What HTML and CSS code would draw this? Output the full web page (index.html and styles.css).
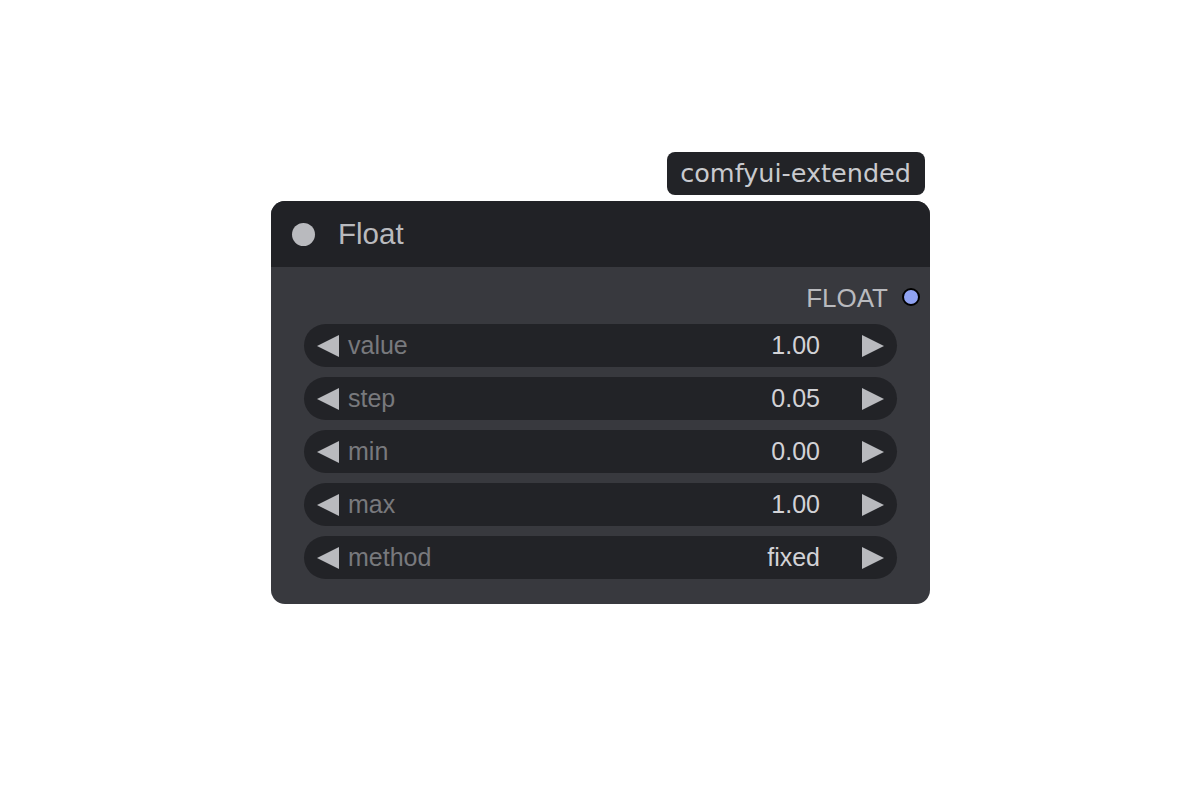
FILE: index.html
```html
<!DOCTYPE html>
<html>
<head>
<meta charset="utf-8">
<link rel="stylesheet" href="styles.css">
</head>
<body>
<div class="wrap">
  <div class="badge">comfyui-extended</div>
  <div class="node">
    <div class="header">
      <span class="hdot"></span>
      <span class="title">Float</span>
    </div>
    <div class="body">
      <div class="output">
        <span class="otext">FLOAT</span>
        <span class="odot"></span>
      </div>
      <div class="widgets">
        <div class="widget">
          <svg class="arrow" viewBox="0 0 22 22"><polygon points="22,0 0,11 22,22"/></svg>
          <span class="label">value</span>
          <span class="val">1.00</span>
          <svg class="arrow right" viewBox="0 0 22 22"><polygon points="0,0 22,11 0,22"/></svg>
        </div>
        <div class="widget">
          <svg class="arrow" viewBox="0 0 22 22"><polygon points="22,0 0,11 22,22"/></svg>
          <span class="label">step</span>
          <span class="val">0.05</span>
          <svg class="arrow right" viewBox="0 0 22 22"><polygon points="0,0 22,11 0,22"/></svg>
        </div>
        <div class="widget">
          <svg class="arrow" viewBox="0 0 22 22"><polygon points="22,0 0,11 22,22"/></svg>
          <span class="label">min</span>
          <span class="val">0.00</span>
          <svg class="arrow right" viewBox="0 0 22 22"><polygon points="0,0 22,11 0,22"/></svg>
        </div>
        <div class="widget">
          <svg class="arrow" viewBox="0 0 22 22"><polygon points="22,0 0,11 22,22"/></svg>
          <span class="label">max</span>
          <span class="val">1.00</span>
          <svg class="arrow right" viewBox="0 0 22 22"><polygon points="0,0 22,11 0,22"/></svg>
        </div>
        <div class="widget">
          <svg class="arrow" viewBox="0 0 22 22"><polygon points="22,0 0,11 22,22"/></svg>
          <span class="label">method</span>
          <span class="val">fixed</span>
          <svg class="arrow right" viewBox="0 0 22 22"><polygon points="0,0 22,11 0,22"/></svg>
        </div>
      </div>
    </div>
  </div>
</div>
</body>
</html>
```
FILE: styles.css
```css
html, body {
  margin: 0;
  padding: 0;
  background: #ffffff;
}
body {
  padding: 152px 0 0 271px;
  font-family: "Liberation Sans", Arial, sans-serif;
}
.wrap {
  width: 659px;
  display: flex;
  flex-direction: column;
  align-items: flex-end;
}
.badge {
  height: 43px;
  box-sizing: border-box;
  padding: 0 14px 2px 13px;
  margin-right: 5px;
  margin-bottom: 6px;
  background: #222327;
  border-radius: 8px;
  color: #c9cace;
  font-family: "DejaVu Sans", sans-serif;
  font-size: 25.5px;
  display: flex;
  align-items: center;
}
.node {
  width: 659px;
  height: 403px;
  border-radius: 14px;
  background: #38393e;
  overflow: hidden;
  display: flex;
  flex-direction: column;
}
.header {
  height: 66px;
  flex: none;
  background: #212226;
  display: flex;
  align-items: center;
  padding-left: 21px;
}
.hdot {
  width: 23px;
  height: 23px;
  border-radius: 50%;
  background: #b9babe;
  margin-right: 23px;
}
.title {
  color: #b9babe;
  font-size: 29.5px;
  line-height: 1;
  padding-bottom: 1px;
}
.body {
  display: flex;
  flex-direction: column;
}
.output {
  height: 43px;
  margin-top: 8px;
  margin-bottom: 6px;
  display: flex;
  justify-content: flex-end;
  align-items: center;
  padding-right: 10px;
}
.otext {
  color: #b9babe;
  font-size: 26px;
  line-height: 1;
  margin-right: 14px;
  padding-top: 3px;
}
.odot {
  width: 14px;
  height: 14px;
  border-radius: 50%;
  background: #8fa2f2;
  border: 2px solid #000000;
  margin-top: 1px;
}
.widgets {
  display: flex;
  flex-direction: column;
  gap: 10px;
  padding: 0 33px;
}
.widget {
  height: 43px;
  border-radius: 22px;
  background: #222327;
  display: flex;
  align-items: center;
  padding: 0 13px;
  font-size: 25px;
}
.arrow {
  width: 22px;
  height: 22px;
  flex: none;
  fill: #b9babe;
  margin-right: 9px;
}
.arrow.right {
  margin-right: 0;
  margin-left: 42px;
}
.label {
  flex: 1;
  color: #78797d;
}
.val {
  color: #d2d2d6;
}
```
